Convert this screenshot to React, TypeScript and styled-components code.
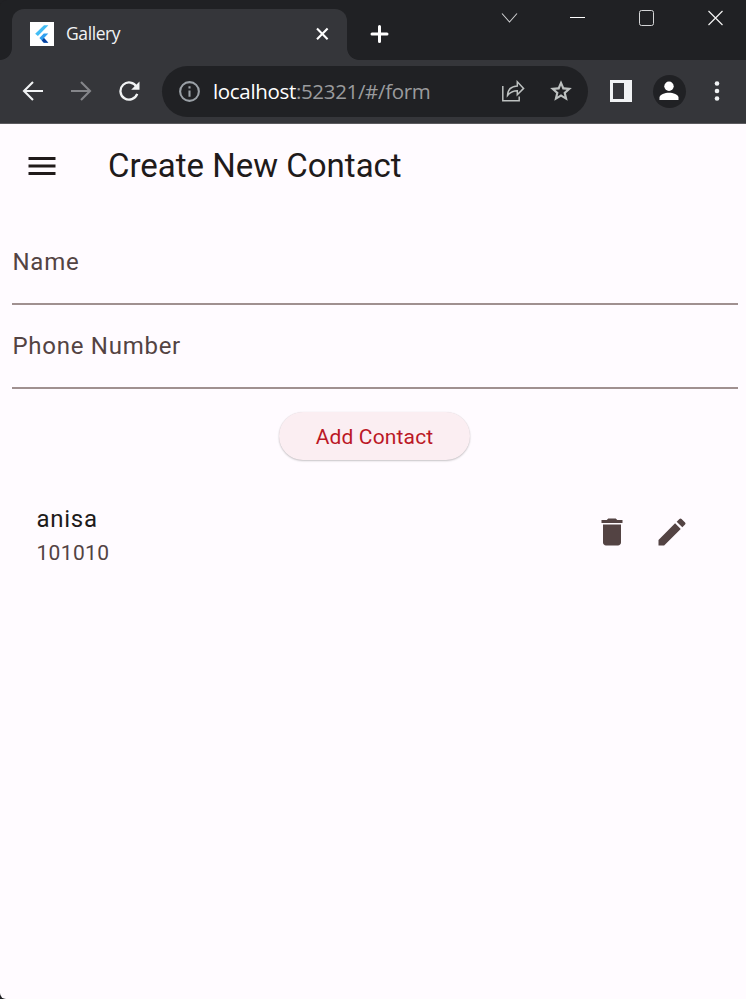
import React from "react";
import styled, { createGlobalStyle } from "styled-components";

const GlobalStyle = createGlobalStyle`
  * { box-sizing: border-box; }
  body { margin: 0; background: #202124; }
  button { font: inherit; border: 0; padding: 0; background: none; }
  svg { display: block; flex: none; }
`;

const Window = styled.div`
  width: 746px;
  height: 999px;
  overflow: hidden;
  display: flex;
  flex-direction: column;
  background: #202124;
  border-radius: 7px 0 0 0;
`;

const TabStrip = styled.header`
  height: 60px;
  flex: none;
  display: flex;
  align-items: flex-start;
  background: #202124;
`;

const TabFoot = styled.div<{ $side: "left" | "right" }>`
  width: 12px;
  height: 12px;
  margin-top: 48px;
  background: radial-gradient(
    circle at ${(p) => (p.$side === "left" ? "0 0" : "100% 0")},
    #202124 11.5px,
    #35363a 12.3px
  );
`;

const Tab = styled.div`
  width: 335px;
  height: 51px;
  margin-top: 9px;
  padding: 0 16px 1px 18px;
  display: flex;
  align-items: center;
  border-radius: 12px 12px 0 0;
  background: #35363a;
`;

const TabTitle = styled.span`
  margin-left: 12px;
  padding-bottom: 2px;
  flex: 1;
  font: 17.5px/24px "Open Sans", sans-serif;
  letter-spacing: -0.4px;
  color: #f1f3f4;
`;

const IconButton = styled.button<{ $w: number; $h: number }>`
  width: ${(p) => p.$w}px;
  height: ${(p) => p.$h}px;
  display: flex;
  flex: none;
  align-items: center;
  justify-content: center;
`;

const NewTab = styled(IconButton)`
  margin: 16px 0 0 2px;
`;

const WindowControls = styled.div`
  margin-left: auto;
  margin-right: -4px;
  display: flex;
`;

const Toolbar = styled.nav`
  height: 64px;
  flex: none;
  padding: 6px 5px 7px 9px;
  display: flex;
  align-items: center;
  background: #35363a;
  border-bottom: 1px solid #5b5a5e;
`;

const AddressBar = styled.div`
  width: 426px;
  height: 51px;
  margin: 0 9px 0 9px;
  padding: 0 3px 0 15px;
  display: flex;
  align-items: center;
  border-radius: 26px;
  background: #202124;
`;

const Url = styled.span`
  flex: 1;
  margin-left: 11px;
  font: 20.5px/28px "Open Sans", sans-serif;
  letter-spacing: -0.33px;
  color: #9a9b9d;
  white-space: nowrap;
`;

const Host = styled.span`
  color: #fff;
`;

const Avatar = styled.span`
  width: 33px;
  height: 33px;
  display: flex;
  align-items: center;
  justify-content: center;
  border-radius: 50%;
  background: #202124;
`;

const Page = styled.main`
  flex: 1;
  background: #fffbff;
  border-bottom-left-radius: 6px;
  font-family: Roboto, sans-serif;
`;

const AppBar = styled.div`
  height: 84px;
  padding-left: 24px;
  display: flex;
  align-items: center;
`;

const Title = styled.h1`
  margin: 0 0 0 48px;
  font-size: 33px;
  line-height: 42px;
  font-weight: 400;
  color: #201a1a;
`;

const Form = styled.form`
  padding: 13px 8px 0 12px;
  display: flex;
  flex-direction: column;
`;

const Field = styled.label`
  height: 84px;
  padding: 23px 0 0 0.5px;
  border-bottom: 2px solid #a09090;
  font-size: 24px;
  line-height: 36px;
  letter-spacing: 0.73px;
  color: #534343;
`;

const AddButton = styled.button`
  && {
    width: 191px;
    height: 48px;
    margin: 23px 1px 0 0;
    padding: 2px 0 0 0;
    align-self: center;
    border-radius: 24px;
    background: #fbeef2;
    color: #bb1826;
    font-size: 21px;
    line-height: 30px;
    letter-spacing: 0.15px;
    box-shadow: 0 1px 2px rgba(0, 0, 0, 0.22), 0 0 1px rgba(0, 0, 0, 0.1);
  }
`;

const Contact = styled.article`
  height: 108px;
  margin-top: 18px;
  padding: 0 44px 0 36.4px;
  display: flex;
  align-items: center;
`;

const ContactText = styled.div`
  flex: 1;
  padding-top: 5px;
`;

const ContactName = styled.div`
  font-size: 24px;
  line-height: 36px;
  letter-spacing: 0.75px;
  color: #201a1a;
`;

const ContactPhone = styled.div`
  font-size: 21px;
  line-height: 32px;
  letter-spacing: 0.375px;
  color: #534343;
`;

const Material = ({ d, size = 36, color = "#534343" }: { d: string; size?: number; color?: string }) => (
  <svg width={size} height={size} viewBox="0 0 24 24" fill={color}>
    <path d={d} />
  </svg>
);

const FlutterLogo = () => (
  <svg width="24" height="24" viewBox="0 0 24 24">
    <rect width="24" height="24" fill="#fff" />
    <path d="M14 3.2h4.4L7.9 14 5.2 11.8z" fill="#42bdf5" />
    <path d="M13.8 11.4h4.5L14 16l4.3 4.8h-4.5L9.4 16z" fill="#2f9ff0" />
    <path d="M11.8 18.4l2.2-2.4 4.3 4.8h-4.5z" fill="#0a3f9c" />
  </svg>
);

const contacts = [{ name: "anisa", phone: "101010" }];

export default function App() {
  return (
    <>
      <GlobalStyle />
      <Window>
        <TabStrip>
          <TabFoot $side="left" />
          <Tab>
            <FlutterLogo />
            <TabTitle>Gallery</TabTitle>
            <IconButton $w={18} $h={24} aria-label="Close tab">
              <svg width="14" height="14" viewBox="0 0 14 14" stroke="#fff" strokeWidth="2.1">
                <path d="M2 1.6l10.6 10.6M12.6 1.6L2 12.2" />
              </svg>
            </IconButton>
          </Tab>
          <TabFoot $side="right" />
          <NewTab $w={36} $h={36} aria-label="New tab">
            <svg width="20" height="20" viewBox="0 0 20 20" stroke="#fff" strokeWidth="3" strokeLinecap="round">
              <path d="M10.5 2.5v15M3 10h15" />
            </svg>
          </NewTab>
          <WindowControls>
            <IconButton $w={67} $h={36} aria-label="Search tabs">
              <svg width="17" height="12" viewBox="0 0 17 12" fill="none" stroke="#d0d1d2" strokeWidth="1.1">
                <path d="M1 1.5l7.5 8.5L16 1.5" />
              </svg>
            </IconButton>
            <IconButton $w={69} $h={36} aria-label="Minimize">
              <svg width="15" height="4" viewBox="0 0 15 4">
                <path d="M0 1h15v1H0z" fill="#fff" />
              </svg>
            </IconButton>
            <IconButton $w={69} $h={36} aria-label="Maximize">
              <svg width="15" height="16" viewBox="0 0 15 16" fill="none" stroke="#d5d6d7">
                <rect x=".5" y=".5" width="14" height="15" rx="2" />
              </svg>
            </IconButton>
            <IconButton $w={69} $h={36} aria-label="Close window">
              <svg width="17" height="16" viewBox="0 0 17 16" stroke="#f1f1f1" strokeWidth="1.2">
                <path d="M1.5 1l14 14M15.5 1l-14 14" />
              </svg>
            </IconButton>
          </WindowControls>
        </TabStrip>

        <Toolbar>
          <IconButton $w={48} $h={48} aria-label="Back">
            <svg width="22" height="20" viewBox="0 0 22 20" fill="none" stroke="#f1f3f4" strokeWidth="2.1">
              <path d="M21 10H2M11 1L2 10l9 9" />
            </svg>
          </IconButton>
          <IconButton $w={48} $h={48} aria-label="Forward">
            <svg width="22" height="20" viewBox="0 0 22 20" fill="none" stroke="#85868a" strokeWidth="2.1">
              <path d="M1 10h19M11 1l9 9-9 9" />
            </svg>
          </IconButton>
          <IconButton $w={48} $h={48} aria-label="Reload">
            <svg width="22" height="20" viewBox="0 0 22 20">
              <path d="M18.6 5.9A8.6 8.6 0 1 0 19.2 12.8" fill="none" stroke="#f1f3f4" strokeWidth="2.3" />
              <path d="M21.5 .5v8.3h-8.3z" fill="#f1f3f4" />
            </svg>
          </IconButton>
          <AddressBar>
            <Material
              size={25}
              color="#9aa0a6"
              d="M11 7h2v2h-2zm0 4h2v6h-2zm1-9a10 10 0 1 0 0 20 10 10 0 0 0 0-20zm0 18a8 8 0 1 1 0-16 8 8 0 0 1 0 16z"
            />
            <Url>
              <Host>localhost</Host>:52321/#/form
            </Url>
            <IconButton $w={48} $h={48} aria-label="Share">
              <svg width="24" height="22" viewBox="0 0 24 22" fill="none" stroke="#bdc1c0" strokeWidth="1.5">
                <path d="M1.8 6v14.8h16.4V16.5" />
                <path d="M6.5 15.5c.2-6.2 3.6-9.2 9.8-9.5V1.8l6.3 6.6-6.3 6.3v-4c-4.2 0-7.3 1.5-9.8 4.8z" />
              </svg>
            </IconButton>
            <IconButton $w={48} $h={48} aria-label="Bookmark">
              <Material
                size={26}
                color="#bdc1c0"
                d="M22 9.24l-7.19-.62L12 2 9.19 8.63 2 9.24l5.46 4.73L5.82 21 12 17.27 18.18 21l-1.63-7.03L22 9.24zM12 15l-3.2 2 .9-3.6-2.9-2.5 3.8-.4L12 7l1.4 3.5 3.8.4-2.9 2.5.9 3.6L12 15z"
              />
            </IconButton>
          </AddressBar>
          <IconButton $w={48} $h={48} aria-label="Side panel">
            <svg width="22" height="22" viewBox="0 0 22 22">
              <path d="M0 0h22v22H0zM3 3v16h11V3z" fill="#f1f3f4" fillRule="evenodd" />
            </svg>
          </IconButton>
          <IconButton $w={48} $h={48} aria-label="Profile">
            <Avatar>
              <svg width="20" height="20" viewBox="0 0 20 20" fill="#fff">
                <circle cx="10" cy="5.2" r="4.7" />
                <path d="M.5 19v-2.4c0-3.2 5.5-4.9 9.5-4.9s9.5 1.7 9.5 4.9V19z" />
              </svg>
            </Avatar>
          </IconButton>
          <IconButton $w={48} $h={48} aria-label="Menu">
            <svg width="6" height="20" viewBox="0 0 6 20" fill="#f1f3f4">
              <circle cx="3" cy="2.5" r="2.3" />
              <circle cx="3" cy="10" r="2.3" />
              <circle cx="3" cy="17.5" r="2.3" />
            </svg>
          </IconButton>
        </Toolbar>

        <Page>
          <AppBar>
            <IconButton $w={36} $h={36} aria-label="Open navigation">
              <Material color="#201a1a" d="M3 18h18v-2H3v2zm0-5h18v-2H3v2zm0-7v2h18V6H3z" />
            </IconButton>
            <Title>Create New Contact</Title>
          </AppBar>
          <Form>
            <Field>Name</Field>
            <Field>Phone Number</Field>
            <AddButton type="button">Add Contact</AddButton>
          </Form>
          {contacts.map((c) => (
            <Contact key={c.name}>
              <ContactText>
                <ContactName>{c.name}</ContactName>
                <ContactPhone>{c.phone}</ContactPhone>
              </ContactText>
              <IconButton $w={60} $h={60} aria-label="Delete">
                <Material d="M6 19c0 1.1.9 2 2 2h8c1.1 0 2-.9 2-2V7H6v12zM19 4h-3.5l-1-1h-5l-1 1H5v2h14V4z" />
              </IconButton>
              <IconButton $w={60} $h={60} aria-label="Edit">
                <Material d="M3 17.25V21h3.75L17.81 9.94l-3.75-3.75L3 17.25zM20.71 7.04a1 1 0 0 0 0-1.41l-2.34-2.34a1 1 0 0 0-1.41 0l-1.83 1.83 3.75 3.75 1.83-1.83z" />
              </IconButton>
            </Contact>
          ))}
        </Page>
      </Window>
    </>
  );
}
